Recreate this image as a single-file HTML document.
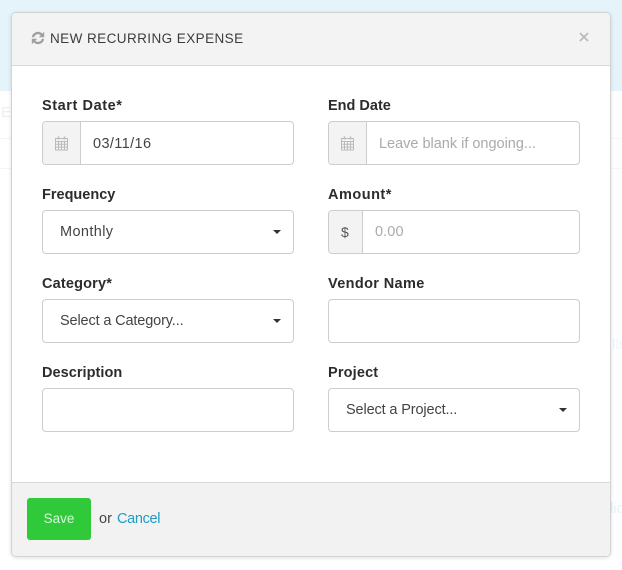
<!DOCTYPE html>
<html><head><meta charset="utf-8"><style>
html,body{margin:0;padding:0}
body{width:622px;height:570px;position:relative;overflow:hidden;background:#fff;font-family:"Liberation Sans",sans-serif;color:#333}
.a{position:absolute}
.bg{left:0;top:0;width:622px;height:91px;background:#e5f4fa}
.hl{left:0;width:622px;height:1px;background:#f5f5f5}
.ghost{color:#eee;font-size:15px}
.modal{left:11px;top:12px;width:598px;height:543px;background:#fff;border:1px solid #d2d2d2;border-radius:5px;box-shadow:0 1px 4px rgba(0,0,0,.12)}
.hd{left:12px;top:13px;width:598px;height:52px;background:#f3f3f3;border-radius:4px 4px 0 0;border-bottom:1px solid #d8d8d8}
.ft{left:12px;top:482px;width:598px;height:73px;background:#f2f2f2;border-radius:0 0 4px 4px;border-top:1px solid #d8d8d8}
.t{white-space:nowrap;line-height:20px}
.lb{font-weight:bold;font-size:14.5px;color:#2c2c2c}
.v{font-size:14.5px;color:#444}
.ph{font-size:14.5px;color:#aaa}
.box{width:250px;height:42px;background:#fff;border:1px solid #cdcdcd;border-radius:4px}
.add{height:42px;background:#f3f3f3;border-right:1px solid #cdcdcd;border-radius:3px 0 0 3px;left:0;top:0}
.car{width:0;height:0;border-left:4px solid transparent;border-right:4px solid transparent;border-top:4px solid #333}
</style></head><body>
<div class="a bg"></div>
<div class="a hl" style="top:138px"></div>
<div class="a hl" style="top:168px"></div>
<div class="a t ghost" style="left:1px;top:103px">E</div>
<div class="a t ghost" style="left:612px;top:335px;color:#eef6fa">lls</div>
<div class="a t ghost" style="left:610px;top:499px;color:#e4f3f9">lic</div>
<div class="a modal"></div>
<div class="a hd"></div>
<div class="a ft"></div>

<svg class="a" style="left:31px;top:31px" width="14" height="14" viewBox="0 0 14 14" fill="none">
<path d="M2 6.2A5 5 0 0 1 10.6 3.6" stroke="#a0a0a0" stroke-width="2.3"/>
<path d="M13.2 .8V6.2H7.8Z" fill="#a0a0a0"/>
<path d="M12 7.8A5 5 0 0 1 3.4 10.4" stroke="#a0a0a0" stroke-width="2.3"/>
<path d="M.8 13.2V7.8H6.2Z" fill="#a0a0a0"/>
</svg>
<div class="a t" style="left:50px;top:29px;font-size:13.5px;color:#3c3c3c;letter-spacing:.43px">NEW RECURRING EXPENSE</div>
<svg class="a" style="left:579px;top:32px" width="10" height="10" viewBox="0 0 10 10"><path d="M1 1L9 9M9 1L1 9" stroke="#bcbcbc" stroke-width="1.9"/></svg>

<div class="a t lb" style="left:42px;top:96px;letter-spacing:.58px">Start Date*</div>
<div class="a box" style="left:42px;top:121px"><div class="a add" style="width:37px"></div></div>
<svg class="a" style="left:54px;top:136px" width="15" height="15" viewBox="0 0 15 15" fill="none" stroke="#bbb">
<rect x="1.5" y="2.5" width="12" height="11.5" fill="#f3f3f3"/><path d="M1.5 5.5H13.5M1.5 8.3H13.5M1.5 11.1H13.5M4.5 5.5V14M7.5 5.5V14M10.5 5.5V14"/><path d="M4.5 .5V3.5M10.5 .5V3.5" stroke-width="1.6"/></svg>
<div class="a t v" style="left:93px;top:134px;letter-spacing:.38px">03/11/16</div>

<div class="a t lb" style="left:328px;top:96px">End Date</div>
<div class="a box" style="left:328px;top:121px"><div class="a add" style="width:37px"></div></div>
<svg class="a" style="left:340px;top:136px" width="15" height="15" viewBox="0 0 15 15" fill="none" stroke="#bbb">
<rect x="1.5" y="2.5" width="12" height="11.5" fill="#f3f3f3"/><path d="M1.5 5.5H13.5M1.5 8.3H13.5M1.5 11.1H13.5M4.5 5.5V14M7.5 5.5V14M10.5 5.5V14"/><path d="M4.5 .5V3.5M10.5 .5V3.5" stroke-width="1.6"/></svg>
<div class="a t ph" style="left:379px;top:134px;letter-spacing:-.01px">Leave blank if ongoing...</div>

<div class="a t lb" style="left:42px;top:185px">Frequency</div>
<div class="a box" style="left:42px;top:210px"></div>
<div class="a t v" style="left:60px;top:222px;letter-spacing:.38px">Monthly</div>
<div class="a car" style="left:273px;top:230px"></div>

<div class="a t lb" style="left:328px;top:185px;letter-spacing:.5px">Amount*</div>
<div class="a box" style="left:328px;top:210px"><div class="a add" style="width:33px"></div></div>
<div class="a t" style="left:341px;top:222px;font-size:14px;color:#555">$</div>
<div class="a t ph" style="left:375px;top:222px;letter-spacing:.1px">0.00</div>

<div class="a t lb" style="left:42px;top:274px;letter-spacing:.17px">Category*</div>
<div class="a box" style="left:42px;top:299px"></div>
<div class="a t v" style="left:60px;top:311px;letter-spacing:-.14px">Select a Category...</div>
<div class="a car" style="left:273px;top:319px"></div>

<div class="a t lb" style="left:328px;top:274px;letter-spacing:.36px">Vendor Name</div>
<div class="a box" style="left:328px;top:299px"></div>

<div class="a t lb" style="left:42px;top:363px;letter-spacing:.05px">Description</div>
<div class="a box" style="left:42px;top:388px"></div>

<div class="a t lb" style="left:328px;top:363px;letter-spacing:.16px">Project</div>
<div class="a box" style="left:328px;top:388px"></div>
<div class="a t v" style="left:346px;top:400px;letter-spacing:-.13px">Select a Project...</div>
<div class="a car" style="left:559px;top:408px"></div>

<div class="a" style="left:27px;top:498px;width:64px;height:42px;background:#2fc93a;border-radius:3px"></div>
<div class="a t" style="left:27px;top:509px;width:64px;text-align:center;font-size:13.5px;color:#d9f7dc;letter-spacing:0">Save</div>
<div class="a t" style="left:99px;top:509px;font-size:14.5px;color:#444">or</div>
<div class="a t" style="left:117px;top:509px;font-size:14.5px;color:#1f9cc4;letter-spacing:-.33px">Cancel</div>
</body></html>
